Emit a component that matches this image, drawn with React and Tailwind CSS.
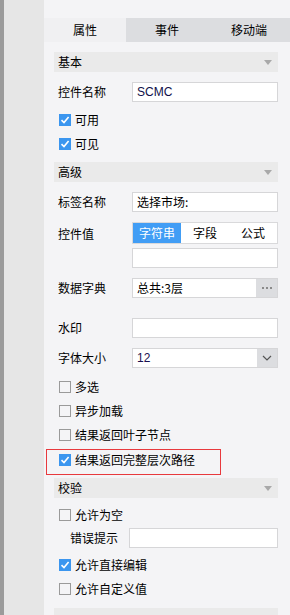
import React from "react";

const font = { fontFamily: '"Noto Sans CJK SC", "Liberation Sans", sans-serif' };

function Header({ title, className = "" }) {
  return (
    <div className={"h-[20px] bg-[#eaeaea] flex items-center justify-between pl-[4px] pr-[6px] " + className}>
      <span className="text-[12px] leading-none text-[#000]">{title}</span>
      <svg width="8" height="5" viewBox="0 0 8 5"><path d="M0 0H8L4 5Z" fill="#a9a9a9" /></svg>
    </div>
  );
}

function Check({ checked, label, className = "" }) {
  return (
    <div className={"h-[24px] flex items-center pl-[5px] " + className}>
      <Box checked={checked} />
      <span className="ml-[4px] text-[12px] leading-none text-[#000]">{label}</span>
    </div>
  );
}

function Box({ checked }) {
  if (checked) {
    return (
      <span className="w-[12px] h-[12px] bg-[#3b96ef] flex items-center justify-center">
        <svg width="10" height="10" viewBox="0 0 10 10">
          <path d="M1.5 5.2L4 7.6L8.6 2" stroke="#fff" strokeWidth="1.6" fill="none" />
        </svg>
      </span>
    );
  }
  return <span className="w-[12px] h-[12px] border border-[#9a9a9a] box-border" />;
}

function Label({ children }) {
  return <div className="w-[78px] shrink-0 pl-[4px] text-[12px] text-[#000]">{children}</div>;
}

function Input({ value, className = "" }) {
  return (
    <div className={"flex-1 h-[20px] bg-white border border-[#d6d6d8] flex items-center pl-[4px] text-[12px] text-[#000] " + className}>
      {value}
    </div>
  );
}

export default function App() {
  return (
    <div className="w-[290px] h-[615px] flex overflow-hidden" style={font}>
      <div className="w-[4px] bg-[#9b9b9b]" />
      <div className="w-[40px] bg-[#e6e6e6]" />
      <div className="flex-1 bg-[#f4f4f6] pt-[18px]">
        <div className="h-[24px] flex text-[12px] text-[#000]">
          <div className="flex-1 bg-[#f0f0f2] flex items-center justify-center">属性</div>
          <div className="flex-1 bg-[#dcdde0] flex items-center justify-center">事件</div>
          <div className="flex-1 bg-[#dcdde0] flex items-center justify-center">移动端</div>
        </div>
        <div className="pl-[10px] pr-[12px]">
          <Header title="基本" className="mt-[10px]" />
          <div className="mt-[10px] flex items-center">
            <Label>控件名称</Label>
            <Input value={<span style={{ fontFamily: '"Liberation Sans", sans-serif' }} className="text-[#10104a]">SCMC</span>} />
          </div>
          <Check checked label="可用" className="mt-[6px]" />
          <Check checked label="可见" />
          <Header title="高级" className="mt-[6px]" />
          <div className="mt-[10px] flex items-center">
            <Label>标签名称</Label>
            <Input value="选择市场:" />
          </div>
          <div className="mt-[10px] flex items-start">
            <div className="w-[78px] shrink-0 pl-[4px] pt-[3px] text-[12px] text-[#000]">控件值</div>
            <div className="flex-1">
              <div className="h-[22px] bg-white border border-[#d9d9db] flex text-[12px] text-[#000]">
                <div className="flex-1 bg-[#419df5] text-white flex items-center justify-center">字符串</div>
                <div className="flex-1 flex items-center justify-center">字段</div>
                <div className="flex-1 flex items-center justify-center">公式</div>
              </div>
              <div className="mt-[4px] h-[20px] bg-white border border-[#d6d6d8]" />
            </div>
          </div>
          <div className="mt-[10px] flex items-center">
            <Label>数据字典</Label>
            <div className="flex-1 h-[20px] bg-white border border-[#d6d6d8] flex items-center">
              <span className="flex-1 pl-[4px] text-[12px] text-[#000]">总共:3层</span>
              <span className="w-[21px] h-full bg-[#dcdde0] flex items-center justify-center gap-[2px]">
                <span className="w-[2px] h-[2px] bg-[#8a8a8a]" />
                <span className="w-[2px] h-[2px] bg-[#8a8a8a]" />
                <span className="w-[2px] h-[2px] bg-[#8a8a8a]" />
              </span>
            </div>
          </div>
          <div className="mt-[20px] flex items-center">
            <Label>水印</Label>
            <Input value="" />
          </div>
          <div className="mt-[10px] flex items-center">
            <Label>字体大小</Label>
            <div className="flex-1 h-[20px] bg-white border border-[#d6d6d8] flex items-center">
              <span className="flex-1 pl-[4px] text-[12px] text-[#1a1050]" style={{ fontFamily: '"Liberation Sans", sans-serif' }}>12</span>
              <span className="w-[20px] h-full bg-[#dcdde0] flex items-center justify-center">
                <svg width="10" height="6" viewBox="0 0 10 6"><path d="M1 1L5 5L9 1" stroke="#555" strokeWidth="1.2" fill="none" /></svg>
              </span>
            </div>
          </div>
          <Check label="多选" className="mt-[7px]" />
          <Check label="异步加载" />
          <Check label="结果返回叶子节点" />
          <div className="mt-[2px] -ml-[8px] w-[175px] h-[26px] border border-[#e8393d] flex items-start pl-[12px] pt-[4px]">
            <Box checked />
            <span className="ml-[4px] text-[12px] leading-[12px] text-[#000]">结果返回完整层次路径</span>
          </div>
          <Header title="校验" className="mt-[3px]" />
          <Check label="允许为空" className="mt-[5px]" />
          <div className="mt-[1px] flex items-center">
            <div className="w-[75px] shrink-0 pl-[16px] text-[12px] text-[#000]">错误提示</div>
            <Input value="" />
          </div>
          <Check checked label="允许直接编辑" className="mt-[5px]" />
          <Check label="允许自定义值" />
          <div className="mt-[7px] h-[20px] bg-[#eaeaea]" />
        </div>
      </div>
    </div>
  );
}
